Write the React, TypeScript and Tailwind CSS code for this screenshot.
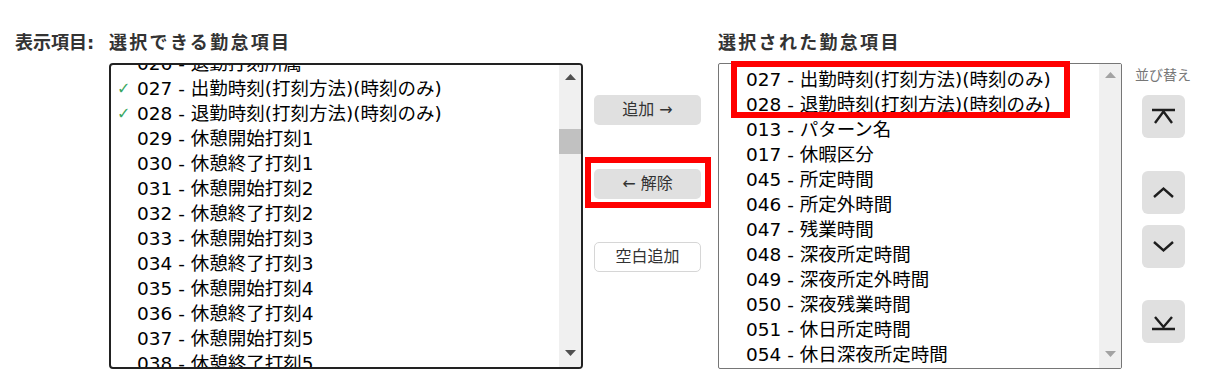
import React from 'react';

const FONT = { fontFamily: '"DejaVu Sans", "Noto Sans CJK JP", sans-serif' };

const available = [
  { code: '026', name: '退勤打刻所属', checked: false },
  { code: '027', name: '出勤時刻(打刻方法)(時刻のみ)', checked: true },
  { code: '028', name: '退勤時刻(打刻方法)(時刻のみ)', checked: true },
  { code: '029', name: '休憩開始打刻1', checked: false },
  { code: '030', name: '休憩終了打刻1', checked: false },
  { code: '031', name: '休憩開始打刻2', checked: false },
  { code: '032', name: '休憩終了打刻2', checked: false },
  { code: '033', name: '休憩開始打刻3', checked: false },
  { code: '034', name: '休憩終了打刻3', checked: false },
  { code: '035', name: '休憩開始打刻4', checked: false },
  { code: '036', name: '休憩終了打刻4', checked: false },
  { code: '037', name: '休憩開始打刻5', checked: false },
  { code: '038', name: '休憩終了打刻5', checked: false },
];

const selected = [
  { code: '027', name: '出勤時刻(打刻方法)(時刻のみ)' },
  { code: '028', name: '退勤時刻(打刻方法)(時刻のみ)' },
  { code: '013', name: 'パターン名' },
  { code: '017', name: '休暇区分' },
  { code: '045', name: '所定時間' },
  { code: '046', name: '所定外時間' },
  { code: '047', name: '残業時間' },
  { code: '048', name: '深夜所定時間' },
  { code: '049', name: '深夜所定外時間' },
  { code: '050', name: '深夜残業時間' },
  { code: '051', name: '休日所定時間' },
  { code: '054', name: '休日深夜所定時間' },
];

function Arrow({ up, color }: { up?: boolean; color: string }) {
  return (
    <svg width="11" height="6" viewBox="0 0 11 6">
      <polygon points={up ? '0,6 5.5,0 11,6' : '0,0 5.5,6 11,0'} fill={color} />
    </svg>
  );
}

function Row({ code, name, checked }: { code: string; name: string; checked?: boolean }) {
  return (
    <div className="flex h-[25px] items-center whitespace-nowrap text-[18.5px] leading-[25px] text-black">
      <span className="w-[26px] shrink-0 pl-[6px] text-[16px] font-bold text-[#3aa862]">{checked ? '✓' : ''}</span>
      <span>
        {code} - {name}
      </span>
    </div>
  );
}

function SortButton({ d }: { d: string }) {
  return (
    <button className="flex h-[43px] w-[43px] items-center justify-center rounded-[6px] bg-[#e0e0e0]">
      <svg width="43" height="43" viewBox="0 0 43 43" fill="none" stroke="#1e1e1e" strokeWidth={2.4} strokeLinecap="butt">
        <path d={d} />
      </svg>
    </button>
  );
}

export default function App() {
  return (
    <div className="h-[388px] w-[1215px] overflow-hidden bg-white" style={FONT}>
      <div className="flex items-start pt-[31px]">
        {/* label */}
        <div className="w-[109px] shrink-0 pl-[15px] text-[18px] font-bold leading-[24px] text-[#333]">表示項目:</div>

        {/* available items */}
        <div className="w-[474px] shrink-0">
          <div className="text-[18px] font-bold leading-[24px] tracking-[2.3px] text-[#333]">選択できる勤怠項目</div>
          <div className="mt-[8px] flex h-[306px] overflow-hidden rounded-[4px] border-2 border-[#222]">
            <div className="flex-1 overflow-hidden">
              <div className="mt-[-14px]">
                {available.map((it) => (
                  <Row key={it.code} {...it} />
                ))}
              </div>
            </div>
            <div className="flex w-[22px] flex-col bg-[#f0f0f0]">
              <div className="flex h-[24px] items-center justify-center">
                <Arrow up color="#505050" />
              </div>
              <div className="mt-[40px] h-[25px] bg-[#c1c1c1]" />
              <div className="flex-1" />
              <div className="flex h-[28px] items-center justify-center">
                <Arrow color="#505050" />
              </div>
            </div>
          </div>
        </div>

        {/* middle buttons */}
        <div className="ml-[11px] flex w-[107px] shrink-0 flex-col pt-[64px] text-[16px] text-[#333]">
          <button className="h-[30px] rounded-[5px] bg-[#e0e0e0]">追加 →</button>
          <div className="relative mt-[44px]">
            <button className="h-[30px] w-full rounded-[5px] bg-[#e0e0e0]">← 解除</button>
            <div className="absolute -bottom-[9px] -left-[9px] -right-[10px] -top-[12px] border-[6px] border-[#ff0000]" />
          </div>
          <button className="mt-[43px] h-[30px] rounded-[5px] border border-[#d6d6d6] bg-white">空白追加</button>
        </div>

        {/* selected items */}
        <div className="ml-[17px] w-[404px] shrink-0">
          <div className="text-[18px] font-bold leading-[24px] tracking-[2.3px] text-[#333]">選択された勤怠項目</div>
          <div className="relative mt-[8px]">
            <div className="flex h-[306px] overflow-hidden rounded-[2px] border border-[#767676]">
              <div className="flex-1 overflow-hidden pt-[3px]">
                {selected.map((it) => (
                  <div key={it.code} className="pl-[1px]">
                    <Row {...it} />
                  </div>
                ))}
              </div>
              <div className="flex w-[22px] flex-col bg-[#f0f0f0]">
                <div className="flex h-[22px] items-center justify-center">
                  <Arrow up color="#a3a3a3" />
                </div>
                <div className="flex-1" />
                <div className="flex h-[28px] items-center justify-center">
                  <Arrow color="#a3a3a3" />
                </div>
              </div>
            </div>
            <div className="absolute left-[13px] top-[-2px] h-[57px] w-[339px] border-[6px] border-[#ff0000]" />
          </div>
        </div>

        {/* sort */}
        <div className="ml-[13px] flex flex-col pt-[35px]">
          <div className="h-[18px] text-[14px] leading-[18px] text-[#777]">並び替え</div>
          <div className="ml-[7px] mt-[11px] flex flex-col">
            <SortButton d="M10 15H33M13 28L21.5 16.5L30 28" />
            <div className="mt-[33px]">
              <SortButton d="M12 26L21.5 17.5L31 26" />
            </div>
            <div className="mt-[11px]">
              <SortButton d="M12 17L21.5 25.5L31 17" />
            </div>
            <div className="mt-[32px]">
              <SortButton d="M13 17L21.5 27L30 17M10 29H33" />
            </div>
          </div>
        </div>
      </div>
    </div>
  );
}
